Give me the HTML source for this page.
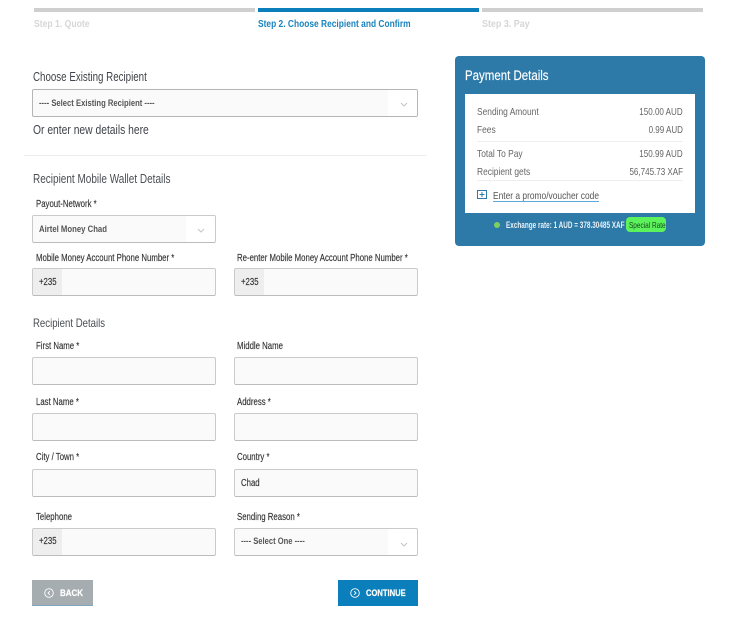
<!DOCTYPE html>
<html><head><meta charset="utf-8">
<style>
html,body{margin:0;padding:0;background:#fff;width:736px;height:630px;overflow:hidden}
body{position:relative;font-family:"Liberation Sans",sans-serif}
#r{position:absolute;left:0;top:0;width:736px;height:630px;filter:blur(.3px)}
.a{position:absolute}
.t{position:absolute;white-space:nowrap;transform-origin:0 50%;transform:scaleX(.8);line-height:14px}
.tr{position:absolute;white-space:nowrap;transform-origin:100% 50%;transform:scaleX(.765);line-height:14px;text-align:right}
.box{position:absolute;box-sizing:border-box;height:28px;background:#fafafa;border:1px solid #cacaca;border-bottom-color:#bcbcbc;border-radius:2px;overflow:hidden}
.pre{position:absolute;left:0;top:0;bottom:0;width:29px;background:#eeeeee}
.l{font-size:10px;color:#333;-webkit-text-stroke:.15px #333;transform:scaleX(.78)}
.h{font-size:12.5px;color:#4a4f55}
.s{font-size:10.5px;color:#666}
</style></head>
<body><div id="r">
<div class="a" style="left:34px;top:8px;width:221px;height:4px;background:#cfcfcf"></div>
<div class="a" style="left:258px;top:8px;width:221px;height:4px;background:#0b7fbb"></div>
<div class="a" style="left:482px;top:8px;width:221px;height:4px;background:#cfcfcf"></div>
<div class="t" style="left:34px;top:17px;font-size:10.5px;font-weight:bold;color:#d6d6d6;transform:scaleX(.82)">Step 1. Quote</div>
<div class="t" style="left:258px;top:17px;font-size:10.5px;font-weight:bold;color:#1a84bd">Step 2. Choose Recipient and Confirm</div>
<div class="t" style="left:482px;top:17px;font-size:10.5px;font-weight:bold;color:#d6d6d6;transform:scaleX(.85)">Step 3. Pay</div>

<div class="t h" style="left:32.5px;top:70px;color:#3f444a;transform:scaleX(.78)">Choose Existing Recipient</div>
<div class="box" style="left:32px;top:89px;width:386px;border-color:#b5b5b5">
  <div class="a" style="left:355px;top:0;right:0;bottom:0;background:#fff"></div>
  <svg class="a" style="left:367px;top:12px" width="8" height="6" viewBox="0 0 8 6"><path d="M1 1l3 3 3-3" fill="none" stroke="#c4c4c4"/></svg>
</div>
<div class="t" style="left:39px;top:96px;font-size:9px;font-weight:bold;color:#555;transform:scaleX(.85)">---- Select Existing Recipient ----</div>
<div class="t h" style="left:32.5px;top:123px;color:#3f444a;transform:scaleX(.825)">Or enter new details here</div>
<div class="a" style="left:24px;top:155px;width:402px;height:1px;background:#ececec"></div>

<div class="t h" style="left:32.5px;top:172px">Recipient Mobile Wallet Details</div>
<div class="t l" style="left:36px;top:198px">Payout-Network *</div>
<div class="box" style="left:32px;top:215px;width:184px">
  <div class="a" style="left:153px;top:0;right:0;bottom:0;background:#fff"></div>
  <svg class="a" style="left:164px;top:12px" width="8" height="6" viewBox="0 0 8 6"><path d="M1 1l3 3 3-3" fill="none" stroke="#c4c4c4"/></svg>
</div>
<div class="t" style="left:39px;top:222px;font-size:9px;font-weight:bold;color:#555;transform:scaleX(.86)">Airtel Money Chad</div>

<div class="t l" style="left:36px;top:252px">Mobile Money Account Phone Number *</div>
<div class="t l" style="left:237px;top:252px">Re-enter Mobile Money Account Phone Number *</div>
<div class="box" style="left:32px;top:268px;width:184px"><div class="pre"></div></div>
<div class="t l" style="left:39px;top:276px">+235</div>
<div class="box" style="left:234px;top:268px;width:184px"><div class="pre"></div></div>
<div class="t l" style="left:241px;top:276px">+235</div>

<div class="t h" style="left:32.5px;top:316px;font-size:12px">Recipient Details</div>
<div class="t l" style="left:36px;top:340px">First Name *</div>
<div class="t l" style="left:237px;top:340px">Middle Name</div>
<div class="box" style="left:32px;top:357px;width:184px"></div>
<div class="box" style="left:234px;top:357px;width:184px"></div>
<div class="t l" style="left:36px;top:396px">Last Name *</div>
<div class="t l" style="left:237px;top:396px">Address *</div>
<div class="box" style="left:32px;top:413px;width:184px"></div>
<div class="box" style="left:234px;top:413px;width:184px"></div>
<div class="t l" style="left:36px;top:451px">City / Town *</div>
<div class="t l" style="left:237px;top:451px">Country *</div>
<div class="box" style="left:32px;top:469px;width:184px"></div>
<div class="box" style="left:234px;top:469px;width:184px"></div>
<div class="t l" style="left:241px;top:477px">Chad</div>
<div class="t l" style="left:36px;top:511px">Telephone</div>
<div class="t l" style="left:237px;top:511px">Sending Reason *</div>
<div class="box" style="left:32px;top:528px;width:184px"><div class="pre"></div></div>
<div class="t l" style="left:39px;top:535px">+235</div>
<div class="box" style="left:234px;top:528px;width:184px;background:#fff">
  <div class="a" style="left:0;top:0;width:153px;bottom:0;background:#fafafa"></div>
  <svg class="a" style="left:165px;top:13px" width="8" height="6" viewBox="0 0 8 6"><path d="M1 1l3 3 3-3" fill="none" stroke="#c4c4c4"/></svg>
</div>
<div class="t" style="left:241px;top:535px;font-size:9.5px;font-weight:bold;color:#555;transform:scaleX(.8)">---- Select One ----</div>

<div class="a" style="left:32px;top:580px;width:61px;height:26px;background:#a6adb1;border-bottom:1px solid #7fa6bd;box-sizing:border-box"></div>
<svg class="a" style="left:44px;top:588px" width="10" height="10" viewBox="0 0 10 10"><circle cx="5" cy="5" r="4.3" fill="none" stroke="#fff" stroke-width=".9"/><path d="M5.8 3.2L4 5l1.8 1.8" fill="none" stroke="#fff" stroke-width=".9"/></svg>
<div class="t" style="left:60px;top:587px;font-size:9.5px;font-weight:bold;color:#fff;transform:scaleX(.84);-webkit-text-stroke:.2px #fff">BACK</div>
<div class="a" style="left:338px;top:580px;width:80px;height:26px;background:#0b7fbb"></div>
<svg class="a" style="left:350px;top:588px" width="10" height="10" viewBox="0 0 10 10"><circle cx="5" cy="5" r="4.3" fill="none" stroke="#fff" stroke-width=".9"/><path d="M4.2 3.2L6 5 4.2 6.8" fill="none" stroke="#fff" stroke-width=".9"/></svg>
<div class="t" style="left:366px;top:587px;font-size:9.5px;font-weight:bold;color:#fff;transform:scaleX(.8);-webkit-text-stroke:.2px #fff">CONTINUE</div>

<div class="a" style="left:455px;top:56px;width:250px;height:190px;background:#2d79a8;border-radius:4px"></div>
<div class="t" style="left:465px;top:69px;font-size:13.5px;color:#fff;transform:scaleX(.85);-webkit-text-stroke:.15px #fff">Payment Details</div>
<div class="a" style="left:465px;top:94px;width:230px;height:119px;background:#fff"></div>
<div class="t s" style="left:477px;top:105px">Sending Amount</div>
<div class="tr s" style="right:53px;top:105px">150.00 AUD</div>
<div class="t s" style="left:477px;top:123px">Fees</div>
<div class="tr s" style="right:53px;top:123px">0.99 AUD</div>
<div class="a" style="left:477px;top:141px;width:206px;height:1px;background:#eee"></div>
<div class="t s" style="left:477px;top:147px">Total To Pay</div>
<div class="tr s" style="right:53px;top:147px">150.99 AUD</div>
<div class="t s" style="left:477px;top:165px">Recipient gets</div>
<div class="tr s" style="right:53px;top:165px">56,745.73 XAF</div>
<div class="a" style="left:477px;top:180px;width:206px;height:1px;background:#eee"></div>
<svg class="a" style="left:477px;top:190px" width="10" height="9" viewBox="0 0 10 9"><rect x=".5" y=".5" width="9" height="8" fill="none" stroke="#2d79a8"/><path d="M5 2v5M2.5 4.5h5" stroke="#2d79a8" fill="none"/></svg>
<div class="t s" style="left:493px;top:189px;color:#555">Enter a promo/voucher code</div>
<div class="a" style="left:493px;top:201px;width:106px;height:1px;background:#5aa9d6"></div>
<div class="a" style="left:494px;top:222px;width:6px;height:6px;border-radius:50%;background:#7ed05e"></div>
<div class="t" style="left:506px;top:218px;font-size:9px;font-weight:bold;color:#e8f1f6;transform:scaleX(.71)">Exchange rate: 1 AUD = 378.30485 XAF</div>
<div class="a" style="left:626px;top:217px;width:40px;height:15px;background:#5cf25c;border-radius:4px"></div>
<div class="t" style="left:629px;top:218px;font-size:8.5px;color:#17491f;transform:scaleX(.76)">Special Rate</div>
</div></body></html>
